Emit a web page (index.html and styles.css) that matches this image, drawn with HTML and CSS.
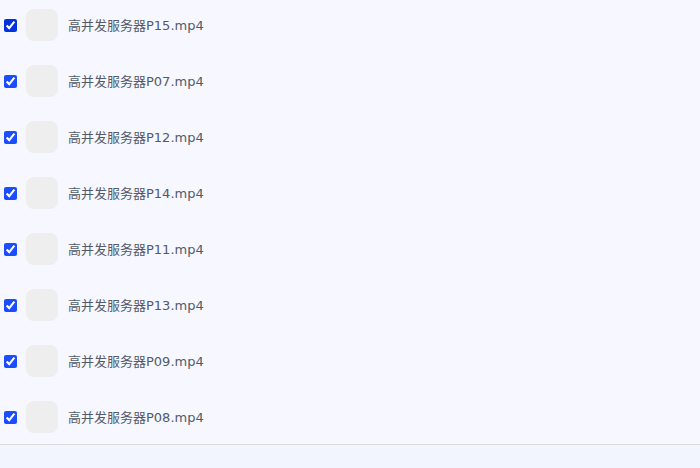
FILE: index.html
```html
<!DOCTYPE html>
<html lang="zh-CN">
<head>
<meta charset="utf-8">
<link rel="stylesheet" href="styles.css">
</head>
<body>

<div class="file-list">
    <label class="file-row">
        <input type="checkbox" checked>
        <span class="thumb"></span>
        <span class="file-name">高并发服务器P15.mp4</span>
    </label>
    <label class="file-row">
        <input type="checkbox" checked>
        <span class="thumb"></span>
        <span class="file-name">高并发服务器P07.mp4</span>
    </label>
    <label class="file-row">
        <input type="checkbox" checked>
        <span class="thumb"></span>
        <span class="file-name">高并发服务器P12.mp4</span>
    </label>
    <label class="file-row">
        <input type="checkbox" checked>
        <span class="thumb"></span>
        <span class="file-name">高并发服务器P14.mp4</span>
    </label>
    <label class="file-row">
        <input type="checkbox" checked>
        <span class="thumb"></span>
        <span class="file-name">高并发服务器P11.mp4</span>
    </label>
    <label class="file-row">
        <input type="checkbox" checked>
        <span class="thumb"></span>
        <span class="file-name">高并发服务器P13.mp4</span>
    </label>
    <label class="file-row">
        <input type="checkbox" checked>
        <span class="thumb"></span>
        <span class="file-name">高并发服务器P09.mp4</span>
    </label>
    <label class="file-row">
        <input type="checkbox" checked>
        <span class="thumb"></span>
        <span class="file-name">高并发服务器P08.mp4</span>
    </label>
</div>

<div class="footer"></div>

</body>
</html>
```

FILE: styles.css
```css
body {
    margin: 0;
    padding: 0;
    background-color: #f2f5fe;
    font-family: "DejaVu Sans", "Noto Sans CJK SC", sans-serif;
}

.file-list {
    display: flex;
    flex-direction: column;
    gap: 6px;
    padding-bottom: 2px;
    background-color: #f7f7ff;
    border-bottom: 1px solid #dcdcdc;
}

.file-row {
    display: flex;
    align-items: center;
    height: 50px;
}

.file-row input {
    width: 13px;
    height: 13px;
    margin: 0 0 0 4px;
    accent-color: #1a4dff;
}

.thumb {
    width: 32px;
    height: 32px;
    margin-left: 9px;
    border-radius: 8px;
    background-color: #eeeeee;
}

.file-name {
    margin-left: 10px;
    margin-top: -1px;
    font-size: 13px;
    color: #525a68;
}

.footer {
    height: 23px;
}
```
